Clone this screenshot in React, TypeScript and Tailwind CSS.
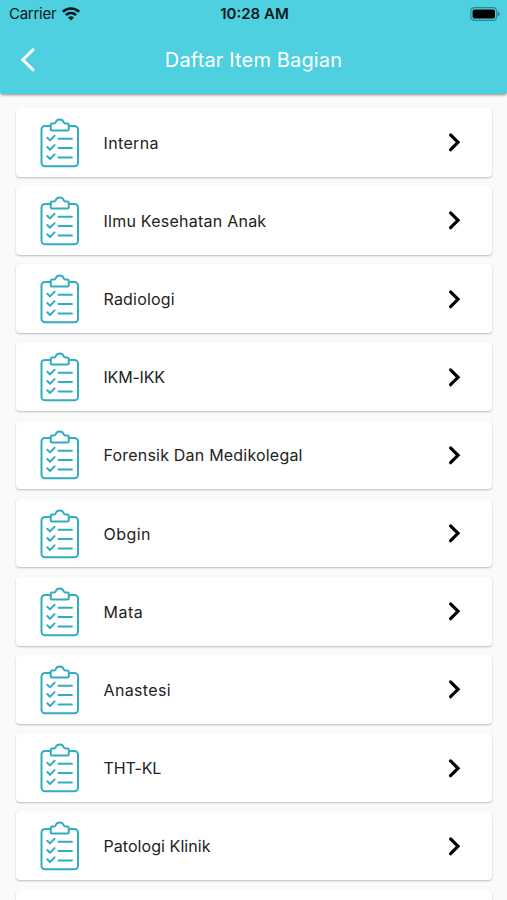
const items = [
  { name: 'Interna', tracking: 'tracking-[0.35px]' },
  { name: 'Ilmu Kesehatan Anak', tracking: 'tracking-[0.24px]' },
  { name: 'Radiologi', tracking: 'tracking-[0.2px]' },
  { name: 'IKM-IKK', tracking: 'tracking-[-0.2px]' },
  { name: 'Forensik Dan Medikolegal', tracking: 'tracking-[0.2px]' },
  { name: 'Obgin', tracking: 'tracking-[0.45px]' },
  { name: 'Mata', tracking: 'tracking-[0.5px]' },
  { name: 'Anastesi', tracking: 'tracking-[0.35px]' },
  { name: 'THT-KL', tracking: 'tracking-[-0.15px]' },
  { name: 'Patologi Klinik', tracking: 'tracking-[0.06px]' },
];

function WifiIcon() {
  return (
    <svg className="ml-[6px] h-[14px] w-[18px]" viewBox="0 0 18 14" fill="none" stroke="#06191c" strokeWidth="2.7">
      <path d="M0.9 4.8a11.6 11.6 0 0 1 16.2 0" />
      <path d="M3.9 8.1a7.3 7.3 0 0 1 10.2 0" />
      <path d="M9 13.6 6 10.6a4.3 4.3 0 0 1 6 0z" fill="#06191c" stroke="none" />
    </svg>
  );
}

function BatteryIcon() {
  return (
    <svg className="h-[14px] w-[30px]" viewBox="0 0 30 14" fill="none">
      <rect x="0.8" y="0.6" width="26" height="12.8" rx="3.8" stroke="#2b8791" strokeWidth="1.2" />
      <rect x="2.6" y="2.4" width="22.4" height="9.2" rx="1.8" fill="#000" />
      <path d="M27.8 4.8v4.4c1.3-.4 2-1.2 2-2.2s-.7-1.8-2-2.2z" fill="#2b8791" />
    </svg>
  );
}

function ClipboardIcon() {
  return (
    <svg
      className="mt-px h-[50px] w-10 shrink-0"
      viewBox="0 0 40 50"
      fill="none"
      stroke="#30adc1"
      strokeWidth="2"
      strokeLinecap="round"
      strokeLinejoin="round"
    >
      <path d="M10.700 8H5a3.500 3.500 0 0 0-3.500 3.500v33.300A3.500 3.500 0 0 0 5 48.300h29.500a3.500 3.500 0 0 0 3.500-3.500V11.500A3.500 3.500 0 0 0 34.500 8h-5.700" />
      <path d="M12 12.500h15.500a1.300 1.300 0 0 0 1.300-1.300V6.800a1.300 1.300 0 0 0-1.300-1.300h-2.400c-.7 0-1-.5-1.300-1.200-.7-1.700-2.100-2.800-4.100-2.800s-3.400 1.100-4.100 2.800c-.3.700-.6 1.200-1.300 1.200H12a1.300 1.300 0 0 0-1.300 1.300v4.400a1.300 1.300 0 0 0 1.300 1.300z" />
      <path d="m7.300 19.700 2.700 2.700 4.600-4.600M18.500 20.800h13.400" />
      <path d="m7.300 29 2.700 2.700 4.600-4.600M18.500 30.100h13.400" />
      <path d="m7.300 38.300 2.700 2.700 4.600-4.600M18.500 39.400h13.400" />
    </svg>
  );
}

export default function App() {
  return (
    <div className="h-[900px] w-full overflow-hidden bg-[#fafafa] font-['Inter',sans-serif] text-[#222]">
      {/* Status bar + title */}
      <header className="h-[94px] rounded-b-[3px] bg-[#4ed0e0] shadow-[0_1px_3px_rgba(0,0,0,0.45)]">
        <div className="grid h-[27px] grid-cols-3 items-center pr-[7px] pl-[9px] text-[#06191c]">
          <div className="flex items-center text-[15px] leading-none tracking-[-0.26px]">
            Carrier
            <WifiIcon />
          </div>
          <div className="text-center text-[15px] leading-none font-semibold">10:28 AM</div>
          <div className="flex justify-end">
            <BatteryIcon />
          </div>
        </div>
        <div className="grid h-[66px] grid-cols-[60px_1fr_60px] items-center">
          <svg className="ml-5 h-[26px] w-4" viewBox="0 0 16 26" fill="none" stroke="#fff" strokeWidth="3" strokeLinecap="round">
            <path d="M13 2.800 2.800 12.800 13 22.800" />
          </svg>
          <h1 className="text-center text-[20px] leading-none tracking-[0.15px] text-white">Daftar Item Bagian</h1>
        </div>
      </header>

      {/* List */}
      <ul className="flex flex-col gap-[9.570px] px-[15.500px] pt-[14px]">
        {items.map((item) => (
          <li
            key={item.name}
            className="flex h-[68.600px] shrink-0 items-center rounded-[4px] bg-white pr-[31px] pl-6 shadow-[0_1px_2px_rgba(0,0,0,0.25)]"
          >
            <ClipboardIcon />
            <span className={`mt-px ml-6 flex-1 text-base whitespace-nowrap ${item.tracking}`}>{item.name}</span>
            <svg className="h-5 w-[13px]" viewBox="0 0 13 20" fill="none" stroke="#000" strokeWidth="3.200" strokeLinecap="round">
              <path d="M2.600 2.900 10 10.300 2.600 17.700" />
            </svg>
          </li>
        ))}
        <li className="h-[68.600px] shrink-0 rounded-[4px] bg-white shadow-[0_1px_2px_rgba(0,0,0,0.25)]" />
      </ul>
    </div>
  );
}
